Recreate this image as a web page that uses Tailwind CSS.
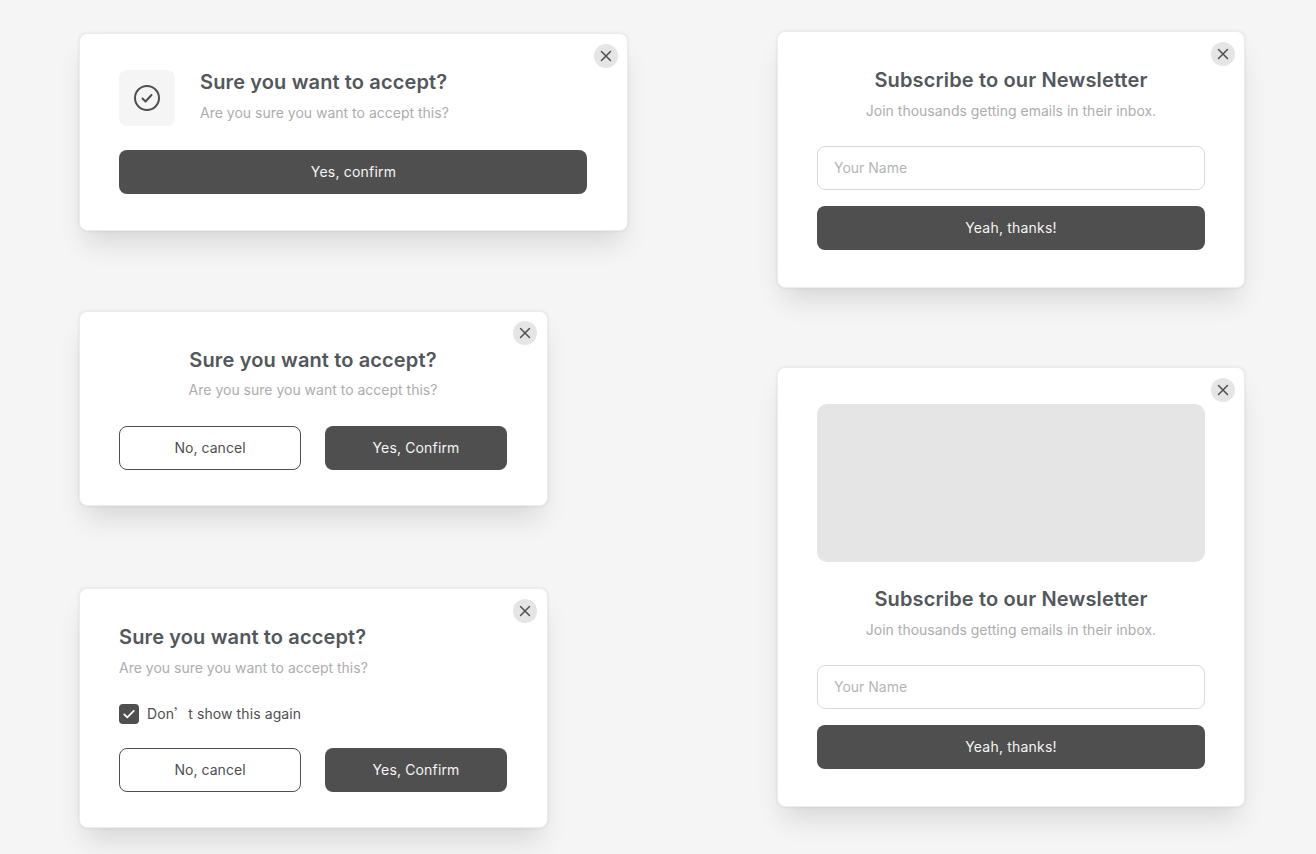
<!DOCTYPE html>
<html><head><meta charset="utf-8"><script src="https://cdn.jsdelivr.net/npm/@tailwindcss/browser@4"></script></head>
<body class="m-0 h-[854px] w-[1316px] overflow-hidden bg-[#f5f5f5] font-['Inter',sans-serif]">
<div class="flex items-start">
<div class="ml-[79px] w-[698px] flex flex-col items-start pt-[33px]">

<section class="relative w-[549px] h-[198px] bg-white rounded-lg border border-[#ededed] shadow-[0_0_3px_rgba(0,0,0,0.10),0_18px_28px_-6px_rgba(0,0,0,0.12)] pl-[39px] pr-[40px] pt-[36px]">
<button class="absolute right-[9px] top-[10px] w-6 h-6 rounded-full bg-[#e5e5e5] flex items-center justify-center"><svg width="12" height="12" viewBox="0 0 12 12" fill="none" stroke="#4f4f4f" stroke-width="1.5" stroke-linecap="round"><path d="M1.5 1.5l9 9M10.5 1.5l-9 9"/></svg></button>
<div class="flex items-start gap-[25px]">
<div class="w-14 h-14 rounded-lg bg-[#f5f5f5] flex items-center justify-center"><svg width="28" height="28" viewBox="0 0 28 28" fill="none" stroke="#4f4f4f" stroke-width="2" stroke-linecap="round" stroke-linejoin="round"><circle cx="14" cy="14" r="12"/><path d="M9.5 14.5l3 3 6-6.5"/></svg></div>
<div class="-mt-[2px]">
<h2 class="text-xl leading-7 font-semibold tracking-[0.13px] text-[#52575c]">Sure you want to accept?</h2>
<p class="mt-[7px] text-sm leading-5 text-[#adadad]">Are you sure you want to accept this?</p>
</div></div>
<button class="mt-6 w-full h-11 rounded-lg bg-[#4f4f4f] pl-px text-sm font-normal tracking-[0.2px] text-[#f5f5f5]">Yes, confirm</button>
</section>

<section class="relative mt-[80px] w-[469px] h-[195px] bg-white rounded-lg border border-[#ededed] shadow-[0_0_3px_rgba(0,0,0,0.10),0_18px_28px_-6px_rgba(0,0,0,0.12)] pl-[39px] pr-[40px] pt-[34px] text-center">
<button class="absolute right-[10px] top-[9px] w-6 h-6 rounded-full bg-[#e5e5e5] flex items-center justify-center"><svg width="12" height="12" viewBox="0 0 12 12" fill="none" stroke="#4f4f4f" stroke-width="1.5" stroke-linecap="round"><path d="M1.5 1.5l9 9M10.5 1.5l-9 9"/></svg></button>
<h2 class="text-xl leading-7 font-semibold tracking-[0.13px] text-[#52575c]">Sure you want to accept?</h2>
<p class="mt-[6px] text-sm leading-5 text-[#adadad]">Are you sure you want to accept this?</p>
<div class="mt-[26px] grid grid-cols-2 gap-6">
<button class="h-11 rounded-lg border border-[#4f4f4f] bg-white text-sm font-normal tracking-[0.05px] text-[#4f4f4f]">No, cancel</button>
<button class="h-11 rounded-lg bg-[#4f4f4f] text-sm font-normal tracking-[0.15px] text-[#f5f5f5]">Yes, Confirm</button>
</div>
</section>

<section class="relative mt-[82px] w-[469px] h-[240px] bg-white rounded-lg border border-[#ededed] shadow-[0_0_3px_rgba(0,0,0,0.10),0_18px_28px_-6px_rgba(0,0,0,0.12)] pl-[39px] pr-[40px] pt-[34px]">
<button class="absolute right-[10px] top-[10px] w-6 h-6 rounded-full bg-[#e5e5e5] flex items-center justify-center"><svg width="12" height="12" viewBox="0 0 12 12" fill="none" stroke="#4f4f4f" stroke-width="1.5" stroke-linecap="round"><path d="M1.5 1.5l9 9M10.5 1.5l-9 9"/></svg></button>
<h2 class="text-xl leading-7 font-semibold tracking-[0.13px] text-[#52575c]">Sure you want to accept?</h2>
<p class="mt-[7px] text-sm leading-5 text-[#adadad]">Are you sure you want to accept this?</p>
<div class="mt-[25px] flex items-center gap-2">
<span class="w-5 h-5 rounded bg-[#4f4f4f] flex items-center justify-center"><svg width="14" height="14" viewBox="0 0 14 14" fill="none" stroke="#fff" stroke-width="1.7" stroke-linecap="round" stroke-linejoin="round"><path d="M2.2 7.4l3.1 3L11.8 3.8"/></svg></span>
<span class="text-sm leading-5 tracking-[0.1px] text-[#4f4f4f]">Don<span class="font-['Noto_Sans_CJK_SC']">’</span>t show this again</span>
</div>
<div class="mt-6 grid grid-cols-2 gap-6">
<button class="h-11 rounded-lg border border-[#4f4f4f] bg-white text-sm font-normal tracking-[0.05px] text-[#4f4f4f]">No, cancel</button>
<button class="h-11 rounded-lg bg-[#4f4f4f] text-sm font-normal tracking-[0.15px] text-[#f5f5f5]">Yes, Confirm</button>
</div>
</section>
</div>

<div class="w-[468px] flex flex-col pt-[31px]">
<section class="relative h-[257px] bg-white rounded-lg border border-[#ededed] shadow-[0_0_3px_rgba(0,0,0,0.10),0_18px_28px_-6px_rgba(0,0,0,0.12)] px-[39px] pt-[34px] text-center">
<button class="absolute right-[9px] top-[10px] w-6 h-6 rounded-full bg-[#e5e5e5] flex items-center justify-center"><svg width="12" height="12" viewBox="0 0 12 12" fill="none" stroke="#4f4f4f" stroke-width="1.5" stroke-linecap="round"><path d="M1.5 1.5l9 9M10.5 1.5l-9 9"/></svg></button>
<h2 class="text-xl leading-7 font-semibold tracking-[0.15px] text-[#52575c]">Subscribe to our Newsletter</h2>
<p class="mt-[7px] text-sm leading-5 text-[#adadad]">Join thousands getting emails in their inbox.</p>
<div class="mt-[25px] h-11 rounded-lg border border-[#d9d9d9] bg-white px-4 flex items-center text-sm text-[#b5b5b5]">Your Name</div>
<button class="mt-4 w-full h-11 rounded-lg bg-[#4f4f4f] text-sm font-normal tracking-[0.2px] text-[#f5f5f5]">Yeah, thanks!</button>
</section>

<section class="relative mt-[79px] h-[440px] bg-white rounded-lg border border-[#ededed] shadow-[0_0_3px_rgba(0,0,0,0.10),0_18px_28px_-6px_rgba(0,0,0,0.12)] px-[39px] pt-9 text-center">
<button class="absolute right-[9px] top-[10px] w-6 h-6 rounded-full bg-[#e5e5e5] flex items-center justify-center"><svg width="12" height="12" viewBox="0 0 12 12" fill="none" stroke="#4f4f4f" stroke-width="1.5" stroke-linecap="round"><path d="M1.5 1.5l9 9M10.5 1.5l-9 9"/></svg></button>
<div class="h-[158px] rounded-[10px] bg-[#e5e5e5]"></div>
<h2 class="mt-[23px] text-xl leading-7 font-semibold tracking-[0.15px] text-[#52575c]">Subscribe to our Newsletter</h2>
<p class="mt-[7px] text-sm leading-5 text-[#adadad]">Join thousands getting emails in their inbox.</p>
<div class="mt-[25px] h-11 rounded-lg border border-[#d9d9d9] bg-white px-4 flex items-center text-sm text-[#b5b5b5]">Your Name</div>
<button class="mt-4 w-full h-11 rounded-lg bg-[#4f4f4f] text-sm font-normal tracking-[0.2px] text-[#f5f5f5]">Yeah, thanks!</button>
</section>
</div>
</div>
</body></html>
